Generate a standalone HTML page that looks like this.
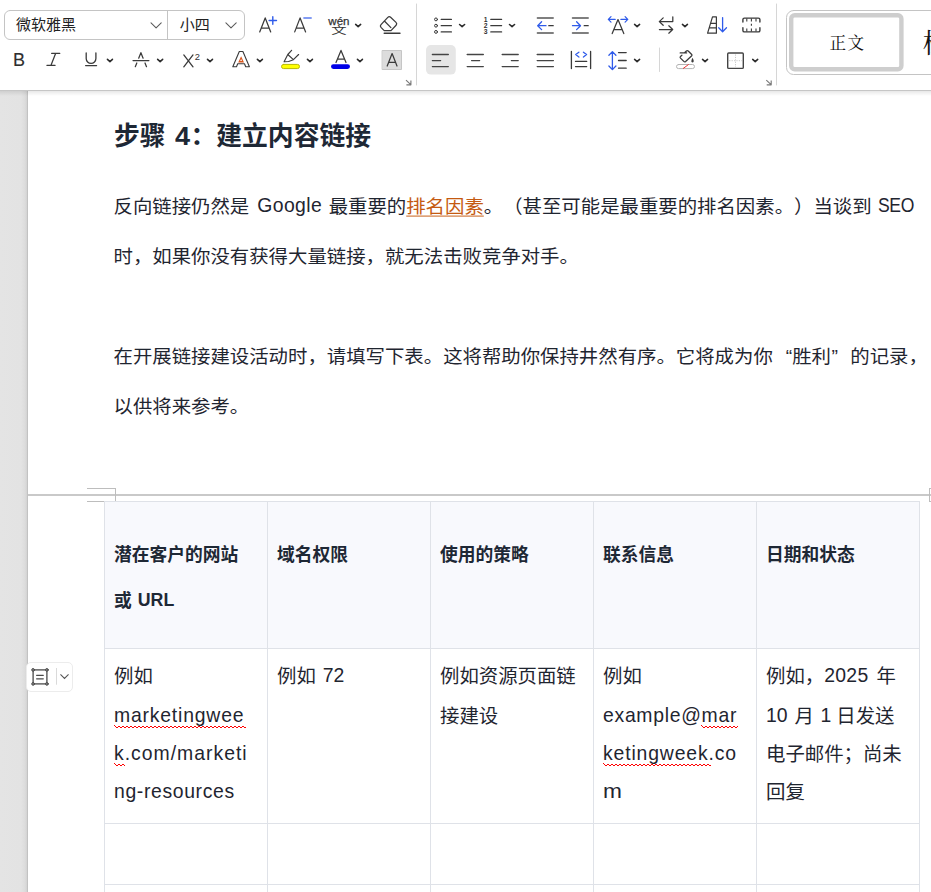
<!DOCTYPE html>
<html lang="zh-CN">
<head>
<meta charset="utf-8">
<title>文档</title>
<style>
html,body{margin:0;padding:0;}
body{width:931px;height:892px;overflow:hidden;background:#fff;position:relative;
  font-family:"Liberation Sans","Noto Sans CJK SC",sans-serif;color:#1f2530;text-spacing-trim:space-all;font-kerning:none;}
#tb{position:absolute;left:0;top:0;width:931px;height:90px;background:#fff;border-bottom:1px solid #c6c6c6;z-index:5;}
#tbshadow{position:absolute;left:0;top:91px;width:931px;height:5px;background:linear-gradient(rgba(0,0,0,.09),rgba(0,0,0,0));z-index:4}
#strip{position:absolute;left:0;top:91px;width:28px;height:801px;background:linear-gradient(90deg,#e4e4e4 0,#e3e3e3 21px,#dcdcdc 25px,#d2d2d2 27px,#c2c2c2 27px,#c2c2c2 28px);z-index:3;}
#tb svg{position:absolute;left:0;top:0;}
.t{position:absolute;white-space:nowrap;line-height:1;}
.ui{color:#222;}
/* document */
.ln{position:absolute;white-space:nowrap;line-height:20px;font-size:19.4px;left:113.5px;color:#1f2530;transform:scaleY(.96);}
.h{position:absolute;white-space:nowrap;line-height:26px;font-size:25.8px;font-weight:bold;left:114px;color:#1e2835;}
.la{display:inline-block;position:relative;top:-1px;transform-origin:0 82%;transform:scale(var(--sx,1),var(--sy,1.075));}
a.lk{color:#c55a11;text-decoration:underline;text-decoration-thickness:1.2px;text-underline-offset:3.2px;}
.q{display:inline-block;width:19.4px;}
/* table */
#thbg{position:absolute;left:104px;top:501px;width:816px;height:147px;background:#f8f9fd;}
.vb{position:absolute;top:501px;width:1px;height:391px;background:#dfe2e8;}
.hb{position:absolute;left:104px;width:816px;height:1px;background:#dfe2e8;}
.th{position:absolute;white-space:nowrap;line-height:18px;font-size:17.75px;font-weight:bold;color:#1e2835;}
.td{position:absolute;white-space:nowrap;line-height:20px;font-size:19.4px;color:#1f2530;transform:scaleY(.97);}
.sq{}
</style>
</head>
<body>
<div id="tb">
<svg width="931" height="90" viewBox="0 0 931 90" fill="none" stroke-linecap="round" stroke-linejoin="round">
<!--ICONS-->
<rect x="4.5" y="10.5" width="240" height="29" rx="5.5" stroke="#c4c4c4" stroke-width="1"/>
<path d="M167.5 10.5V39.5" stroke="#c4c4c4" stroke-width="1"/>
<path d="M151 22.8L156.1 27.9L161.2 22.8" stroke="#5a5a5a" stroke-width="1.05"/>
<path d="M225.9 22.8L231 27.9L236.2 22.8" stroke="#5a5a5a" stroke-width="1.05"/>
<text x="16" y="30.3" font-size="15" fill="#222" stroke="none" font-family="'Liberation Sans','Noto Sans CJK SC',sans-serif">微软雅黑</text>
<text x="179.8" y="30.3" font-size="15" fill="#222" stroke="none" font-family="'Liberation Sans','Noto Sans CJK SC',sans-serif">小四</text>
<path d="M259.7 31.9L265.2 17.9L270.7 31.9M261.19 28.1H269.21" stroke="#3a3a3a" stroke-width="1.25" />
<path d="M269.1 20.5H276.5M272.8 16.8V24.2" stroke="#2f5bea" stroke-width="1.4"/>
<path d="M294.7 31.9L300.1 17.9L305.6 31.9M296.17 28.1H304.11" stroke="#3a3a3a" stroke-width="1.25" />
<path d="M303.9 18.1H311.2" stroke="#5b7cf0" stroke-width="1.5"/>
<text x="328.3" y="24.8" font-size="11.2" fill="#333" stroke="#333" stroke-width=".25" font-family="'Liberation Sans',sans-serif" textLength="21.2" lengthAdjust="spacingAndGlyphs">wén</text>
<text transform="translate(331.2 34.3) scale(1 0.63)" x="0" y="0" font-size="15.4" fill="#333" stroke="none" font-family="'Liberation Sans','Noto Sans CJK SC',sans-serif">文</text>
<path d="M355.65 24.45L358.15 26.65L360.65 24.45" stroke="#2b2b2b" stroke-width="1.6"/>
<g stroke="#3a3a3a" stroke-width="1.25"><path d="M384.2 30.6L381 27.4Q379.7 26 381 24.6L387.8 17.4Q389.2 16 390.6 17.3L396 22.4Q397.4 23.8 396.1 25.2L391 30.6ZM384.4 21L390.9 27.6"/><path d="M384.2 33.2H400" stroke-width="1.4"/></g>
<path d="M416.5 4V85M776.5 4V85" stroke="#d6d6d6" stroke-width="1"/>
<path d="M659.5 48V71.5" stroke="#d6d6d6" stroke-width="1"/>
<text x="12.9" y="65.6" font-size="18" fill="#2e2e2e" stroke="#2e2e2e" stroke-width=".15" font-family="'Liberation Sans',sans-serif" textLength="12" lengthAdjust="spacingAndGlyphs">B</text>
<path d="M51.6 53.3H59.8M46.9 65.3H55.1M55.7 53.3L51 65.3" stroke="#3a3a3a" stroke-width="1.25"/>
<path d="M86.2 53V58.6A4.85 4.85 0 0 0 95.9 58.6V53" stroke="#3a3a3a" stroke-width="1.3"/><path d="M85.6 65.6H96.6" stroke="#3a3a3a" stroke-width="1.2"/>
<path d="M107.45 59.40L109.95 61.60L112.45 59.40" stroke="#2b2b2b" stroke-width="1.6"/>
<path d="M138.7 58.2L140.9 52.7L143.1 58.2M136.8 63L135.3 66.7M145 63L146.5 66.7" stroke="#3a3a3a" stroke-width="1.25"/><path d="M133 60.6H148.9" stroke="#3a3a3a" stroke-width="1.2"/>
<path d="M157.65 59.40L160.15 61.60L162.65 59.40" stroke="#2b2b2b" stroke-width="1.6"/>
<path d="M183.8 54.9L193 66.8M193 54.9L183.8 66.8" stroke="#3a3a3a" stroke-width="1.3"/>
<text x="194.8" y="59.5" font-size="9.4" fill="#333" stroke="none" font-family="'Liberation Sans',sans-serif">2</text>
<path d="M207.50 59.40L210.00 61.60L212.50 59.40" stroke="#2b2b2b" stroke-width="1.6"/>
<path d="M232.8 66.7L239.3 51.5H242.9L249.4 66.7H245.7L244.5 63.7H237.7L236.5 66.7Z" stroke="#3a3a3a" stroke-width="1.1"/>
<path d="M241.1 56.2L244 62.6H238.2Z" fill="#d8561c" stroke="none"/><path d="M241.1 59L242 61H240.2Z" fill="#fff" stroke="none"/>
<path d="M257.40 59.40L259.90 61.60L262.40 59.40" stroke="#2b2b2b" stroke-width="1.6"/>
<path d="M291.6 50.3L287.8 54.5L284.1 61.8L288.6 61.5L293.4 59.7L298.6 54.5M287.8 54.5L293.4 59.7" stroke="#3a3a3a" stroke-width="1.15"/>
<rect x="281.5" y="64.4" width="18" height="4.2" rx="2.1" fill="#ffff00" stroke="#b9b900" stroke-width="1"/>
<path d="M307.45 59.40L309.95 61.60L312.45 59.40" stroke="#2b2b2b" stroke-width="1.6"/>
<path d="M336 62.5L341 50.4L346 62.5M337.45 59H344.55" stroke="#3a3a3a" stroke-width="1.25" />
<rect x="331" y="64.2" width="19" height="4.8" rx="2.4" fill="#0000e8" stroke="none"/>
<path d="M357.45 59.40L359.95 61.60L362.45 59.40" stroke="#2b2b2b" stroke-width="1.6"/>
<rect x="382.5" y="50.5" width="19" height="19" fill="#dcdcdc" stroke="#c6c6c6" stroke-width="1"/>
<path d="M387.2 66L392.1 53.6L397 66M388.66 62.3H395.54" stroke="#3a3a3a" stroke-width="1.25" />
<path d="M406.0 80.1L410.8 84.7M410.9 80.5V84.8H406.4" stroke="#7a7a7a" stroke-width="1.15" stroke-linecap="butt"/>
<path d="M766.3 80.1L771.1 84.7M771.2 80.5V84.8H766.7" stroke="#7a7a7a" stroke-width="1.15" stroke-linecap="butt"/>
<circle cx="436" cy="19.4" r="1.45" stroke="#3a3a3a" stroke-width="1"/>
<circle cx="436" cy="25.7" r="1.45" stroke="#3a3a3a" stroke-width="1"/>
<circle cx="436" cy="31.9" r="1.45" stroke="#3a3a3a" stroke-width="1"/>
<path d="M441.2 19.4H451.4M441.2 25.7H451.4M441.2 31.9H451.4M490.8 19.4H501.6M490.8 25.7H501.6M490.8 31.9H501.6" stroke="#3a3a3a" stroke-width="1.25"/>
<path d="M459.60 24.50L462.10 26.70L464.60 24.50" stroke="#2b2b2b" stroke-width="1.6"/>
<text x="483.7" y="21.7" font-size="6.8" font-weight="bold" fill="#333" stroke="none" font-family="'Liberation Sans',sans-serif">1</text>
<text x="483.7" y="28" font-size="6.8" font-weight="bold" fill="#333" stroke="none" font-family="'Liberation Sans',sans-serif">2</text>
<text x="483.7" y="34.2" font-size="6.8" font-weight="bold" fill="#333" stroke="none" font-family="'Liberation Sans',sans-serif">3</text>
<path d="M509.55 24.50L512.05 26.70L514.55 24.50" stroke="#2b2b2b" stroke-width="1.6"/>
<path d="M537.4 18H553.2M537.4 33.1H553.2M572.5 18H588.2M572.5 33.1H588.2" stroke="#555" stroke-width="1.5"/>
<path d="M537.8 25.7H546M541.6 21.8L537.7 25.7L541.6 29.6M572.5 25.7H580.4M576.6 21.8L580.5 25.7L576.6 29.6" stroke="#2f5bea" stroke-width="1.3"/>
<path d="M548.8 25.7H553.2M584.2 25.7H588.2" stroke="#3a3a3a" stroke-width="1.3"/>
<path d="M612.2 33.6L618 19.6L623.8 33.6M613.86 29.6H622.14" stroke="#3a3a3a" stroke-width="1.25" />
<path d="M608.4 19.4H615.2M611 16.7L608.3 19.4L611 22.1M620.9 19.4H627.7M625.1 16.7L627.8 19.4L625.1 22.1" stroke="#2f5bea" stroke-width="1.2"/>
<path d="M634.60 24.45L637.10 26.65L639.60 24.45" stroke="#2b2b2b" stroke-width="1.6"/>
<path d="M672.8 16.8V21.6H659.4M663.2 17.9L659.3 21.6L663.2 25.3M659.4 29.5H672.6M668.8 25.8L672.7 29.5L668.8 33.2" stroke="#3a3a3a" stroke-width="1.25"/>
<path d="M682.45 24.45L684.95 26.65L687.45 24.45" stroke="#2b2b2b" stroke-width="1.6"/>
<path d="M712.5 16.9H716.4V33.2H707.6ZM710.7 23.4H716.4M709.2 27.9H716.4" stroke="#3a3a3a" stroke-width="1.2"/>
<path d="M722.6 17.6V31.6M718.7 27.8L722.6 31.7L726.5 27.8" stroke="#2f5bea" stroke-width="1.3"/>
<path d="M742.9 22V19.6Q742.9 18.1 744.4 18.1H758.4Q759.9 18.1 759.9 19.6V22M742.9 27.8V30.4Q742.9 31.9 744.4 31.9H758.4Q759.9 31.9 759.9 30.4V27.8" stroke="#3a3a3a" stroke-width="1.4"/><path d="M746.8 18.5V21.4M751.4 18.5V21.4M756 18.5V21.4M746.8 28.6V31.5M751.4 28.6V31.5M756 28.6V31.5M751.4 23.8V25.8" stroke="#3a3a3a" stroke-width="1.1" stroke-linecap="butt"/>
<rect x="426" y="45.1" width="29.8" height="29.5" rx="5" fill="#e6e6e6" stroke="none"/>
<path d="M432.4 54.5H448.3M432.4 60.6H440.6M432.4 66.6H448.3M467.2 54.5H483.3M471.6 60.6H479.6M467.2 66.6H483.3M502.2 54.5H518.2M511.4 60.6H518.2M502.2 66.6H518.2M537.2 54.5H553.4M537.2 60.6H553.4M537.2 66.6H553.4" stroke="#444" stroke-width="1.4"/>
<path d="M571.4 51.5V68.6M590.6 51.5V68.6M575.5 61.4H586.7M575.5 66.6H586.7" stroke="#3a3a3a" stroke-width="1.3"/>
<path d="M578.9 52.2L575.7 54.6L578.9 57M583.4 52.2L586.6 54.6L583.4 57" stroke="#2f5bea" stroke-width="1.25"/>
<path d="M612.4 51.8V69.4M608.9 55.2L612.4 51.6L615.9 55.2M608.9 66L612.4 69.6L615.9 66" stroke="#2f5bea" stroke-width="1.3"/>
<path d="M618.5 52.6H626.2M618.5 60.5H626.2M618.5 68.2H626.2" stroke="#3a3a3a" stroke-width="1.3"/>
<path d="M634.60 59.45L637.10 61.65L639.60 59.45" stroke="#2b2b2b" stroke-width="1.6"/>
<path d="M680.2 52.9H686.6M684.6 52.8L686.4 51Q687.3 50.1 688.2 51L691.5 54.2Q692.4 55.1 691.5 56L685.6 61.5Q684.7 62.3 683.8 61.4L680.5 58.1Q679.7 57.2 680.5 56.4L681.9 55.2" stroke="#3a3a3a" stroke-width="1.3"/>
<path d="M692.5 57.8Q694 60.3 693.7 61.5Q693.3 62.6 692.4 62.5Q691.3 62.3 691.3 61.2Q691.4 60 692.5 57.8Z" fill="#3a3a3a" stroke="none"/>
<rect x="676.5" y="64.5" width="18" height="4.1" rx="2.05" stroke="#b4b4b4" stroke-width="1"/><path d="M683.3 68.4L688.4 64.6" stroke="#ee3434" stroke-width="1"/>
<path d="M702.55 59.45L705.05 61.65L707.55 59.45" stroke="#2b2b2b" stroke-width="1.6"/>
<rect x="727.7" y="53" width="15.6" height="15.4" rx="1" stroke="#444" stroke-width="1.4"/><path d="M735.5 54.5V67M729.2 60.7H741.8" stroke="#c9c9c9" stroke-width="1" stroke-dasharray="1.2 1.2" stroke-linecap="butt"/>
<path d="M752.70 59.45L755.20 61.65L757.70 59.45" stroke="#2b2b2b" stroke-width="1.6"/>
<rect x="786.5" y="10.5" width="170" height="64" rx="7" stroke="#c4c4c4" stroke-width="1"/>
<rect x="791.2" y="15.2" width="110.2" height="54" rx="3.5" stroke="#cecece" stroke-width="4.4" fill="#fff"/>
<text x="829.6" y="49.4" font-size="16.6" fill="#111" stroke="none" letter-spacing="1.4" font-family="'Liberation Serif','Noto Serif CJK SC',serif">正文</text>
<text x="922.7" y="53.1" font-size="27.8" fill="#111" stroke="none" font-family="'Liberation Serif','Noto Serif CJK SC',serif">标</text>
</svg>
</div>
<div id="tbshadow"></div>
<div id="strip"></div>


<div class="h" id="h1" style="top:123px">步骤<span class="la" id="h4" style="--sy:1;margin:0 1.5px 0 9px;top:0;--sx:1.05">4</span>：建立内容链接</div>

<div class="ln" id="l1" style="top:196px">反向链接仍然是<span class="la" id="g1" style="margin:0 6.5px 0 8px;letter-spacing:.4px">Google</span>最重要的<a class="lk">排名因素</a>。（甚至可能是最重要的排名因素。）当谈到<span class="la" id="g2" style="margin-left:6px;letter-spacing:-.4px;--sx:.905">SEO</span></div>
<div class="ln" id="l2" style="top:246px">时，如果你没有获得大量链接，就无法击败竞争对手。</div>
<div class="ln" id="l3" style="top:346px">在开展链接建设活动时，请填写下表。这将帮助你保持井然有序。它将成为你<span class="q" style="text-align:right">“</span>胜利<span class="q" style="text-align:left;text-indent:.5px">”</span>的记录，</div>
<div class="ln" id="l4" style="top:396px">以供将来参考。</div>

<!-- page break + crop marks -->
<div style="position:absolute;left:28px;top:494px;width:903px;height:2px;background:#c9c9c9"></div>
<div style="position:absolute;left:87px;top:488px;width:28px;height:1px;background:#bdbdbd"></div>
<div style="position:absolute;left:115px;top:488px;width:1px;height:14px;background:#bdbdbd"></div>
<div style="position:absolute;left:87px;top:501px;width:18px;height:1px;background:#bdbdbd"></div>
<div style="position:absolute;left:929px;top:488px;width:1px;height:14px;background:#bdbdbd"></div>
<div style="position:absolute;left:929px;top:488px;width:2px;height:1px;background:#bdbdbd"></div>
<div style="position:absolute;left:929px;top:501px;width:2px;height:1px;background:#bdbdbd"></div>

<!-- table -->
<div id="thbg"></div>
<div class="vb" style="left:104px"></div><div class="vb" style="left:267px"></div><div class="vb" style="left:430px"></div><div class="vb" style="left:593px"></div><div class="vb" style="left:756px"></div><div class="vb" style="left:919px"></div>
<div class="hb" style="top:501px"></div><div class="hb" style="top:648px"></div><div class="hb" style="top:823px"></div><div class="hb" style="top:884px"></div>

<div class="th" style="left:114px;top:546px">潜在客户的网站</div>
<div class="th" style="left:114px;top:592px">或<span class="la" id="url" style="--sy:1;margin-left:6px">URL</span></div>
<div class="th" style="left:277px;top:546px">域名权限</div>
<div class="th" style="left:440px;top:546px">使用的策略</div>
<div class="th" style="left:603px;top:546px">联系信息</div>
<div class="th" style="left:766px;top:546px">日期和状态</div>

<div class="td" style="left:114px;top:666px">例如</div>
<div class="td" style="left:114px;top:706px"><span class="la sq" id="m1" style="letter-spacing:.8px">marketingwee</span></div>
<div class="td" style="left:114px;top:744px"><span class="la" id="m2" style="letter-spacing:1px"><span class="sq">k</span>.com/marketi</span></div>
<div class="td" style="left:114px;top:782px"><span class="la" id="m3" style="letter-spacing:.63px">ng-resources</span></div>

<div class="td" style="left:277px;top:666px">例如<span class="la" id="n72" style="margin-left:7px">72</span></div>

<div class="td" style="left:440px;top:666px">例如资源页面链</div>
<div class="td" style="left:440px;top:706px">接建设</div>

<div class="td" style="left:603px;top:666px">例如</div>
<div class="td" style="left:603px;top:706px"><span class="la" id="e1" style="letter-spacing:.7px">example@<span class="sq">mar</span></span></div>
<div class="td" style="left:603px;top:744px"><span class="la" id="e2" style="letter-spacing:.85px"><span class="sq">ketingweek</span>.co</span></div>
<div class="td" style="left:603px;top:782px"><span class="la" id="e3" style="--sx:1.17">m</span></div>

<div class="td" style="left:766px;top:666px">例如，<span class="la" id="d1" style="margin:0 8px 0 0;letter-spacing:.3px">2025</span>年</div>
<div class="td" style="left:766px;top:706px"><span class="la" id="d2" style="margin:0 7px 0 0">10</span>月<span class="la" id="d3" style="margin:0 5px 0 6.5px">1</span>日发送</div>
<div class="td" style="left:766px;top:744px">电子邮件；尚未</div>
<div class="td" style="left:766px;top:782px">回复</div>

<!-- spelling squiggles -->
<svg style="position:absolute;left:114px;top:725px" width="132" height="3" viewBox="0 0 132 3" shape-rendering="crispEdges"><rect x="0" y="0" width="1" height="1" fill="#ff0000"/><rect x="1" y="1" width="1" height="1" fill="#ff0000"/><path d="M2 2.5H132" stroke="#ff0000" stroke-width="1" stroke-dasharray="2 2"/><path d="M4 1.5H132" stroke="#ff0000" stroke-width="1" stroke-dasharray="2 2"/></svg><svg style="position:absolute;left:114px;top:763px" width="11" height="3" viewBox="0 0 11 3" shape-rendering="crispEdges"><rect x="0" y="0" width="1" height="1" fill="#ff0000"/><rect x="1" y="1" width="1" height="1" fill="#ff0000"/><path d="M2 2.5H11" stroke="#ff0000" stroke-width="1" stroke-dasharray="2 2"/><path d="M4 1.5H11" stroke="#ff0000" stroke-width="1" stroke-dasharray="2 2"/></svg><svg style="position:absolute;left:701px;top:725px" width="37" height="3" viewBox="0 0 37 3" shape-rendering="crispEdges"><rect x="0" y="0" width="1" height="1" fill="#ff0000"/><rect x="1" y="1" width="1" height="1" fill="#ff0000"/><path d="M2 2.5H37" stroke="#ff0000" stroke-width="1" stroke-dasharray="2 2"/><path d="M4 1.5H37" stroke="#ff0000" stroke-width="1" stroke-dasharray="2 2"/></svg><svg style="position:absolute;left:603px;top:763px" width="108" height="3" viewBox="0 0 108 3" shape-rendering="crispEdges"><rect x="0" y="0" width="1" height="1" fill="#ff0000"/><rect x="1" y="1" width="1" height="1" fill="#ff0000"/><path d="M2 2.5H108" stroke="#ff0000" stroke-width="1" stroke-dasharray="2 2"/><path d="M4 1.5H108" stroke="#ff0000" stroke-width="1" stroke-dasharray="2 2"/></svg>
<!-- floating widget -->
<div style="position:absolute;left:26px;top:662px;width:47px;height:30px;border:1px solid #ececec;border-radius:5px;background:#fff;box-sizing:border-box;z-index:4"></div>
<svg style="position:absolute;left:26px;top:662px;z-index:5" width="48" height="30" viewBox="26 662 48 30" fill="none" stroke="#4a4a4a" stroke-linecap="round">
<rect x="33.1" y="669.9" width="13.8" height="14" stroke-width="1.3"/>
<g fill="#8c8c8c" stroke-width="1"><circle cx="33.1" cy="669.9" r="1.35"/><circle cx="46.9" cy="669.9" r="1.35"/><circle cx="33.1" cy="683.9" r="1.35"/><circle cx="46.9" cy="683.9" r="1.35"/></g>
<path d="M36.6 675.3H43.3M36.6 678.8H43.3" stroke-width="1.2"/>
<path d="M56.5 668V684.7" stroke="#dadada" stroke-width="1" stroke-linecap="butt"/>
<path d="M60.7 674.7L64.5 678.4L68.3 674.7" stroke-width="1.05" stroke="#555"/>
</svg>


</body>
</html>
